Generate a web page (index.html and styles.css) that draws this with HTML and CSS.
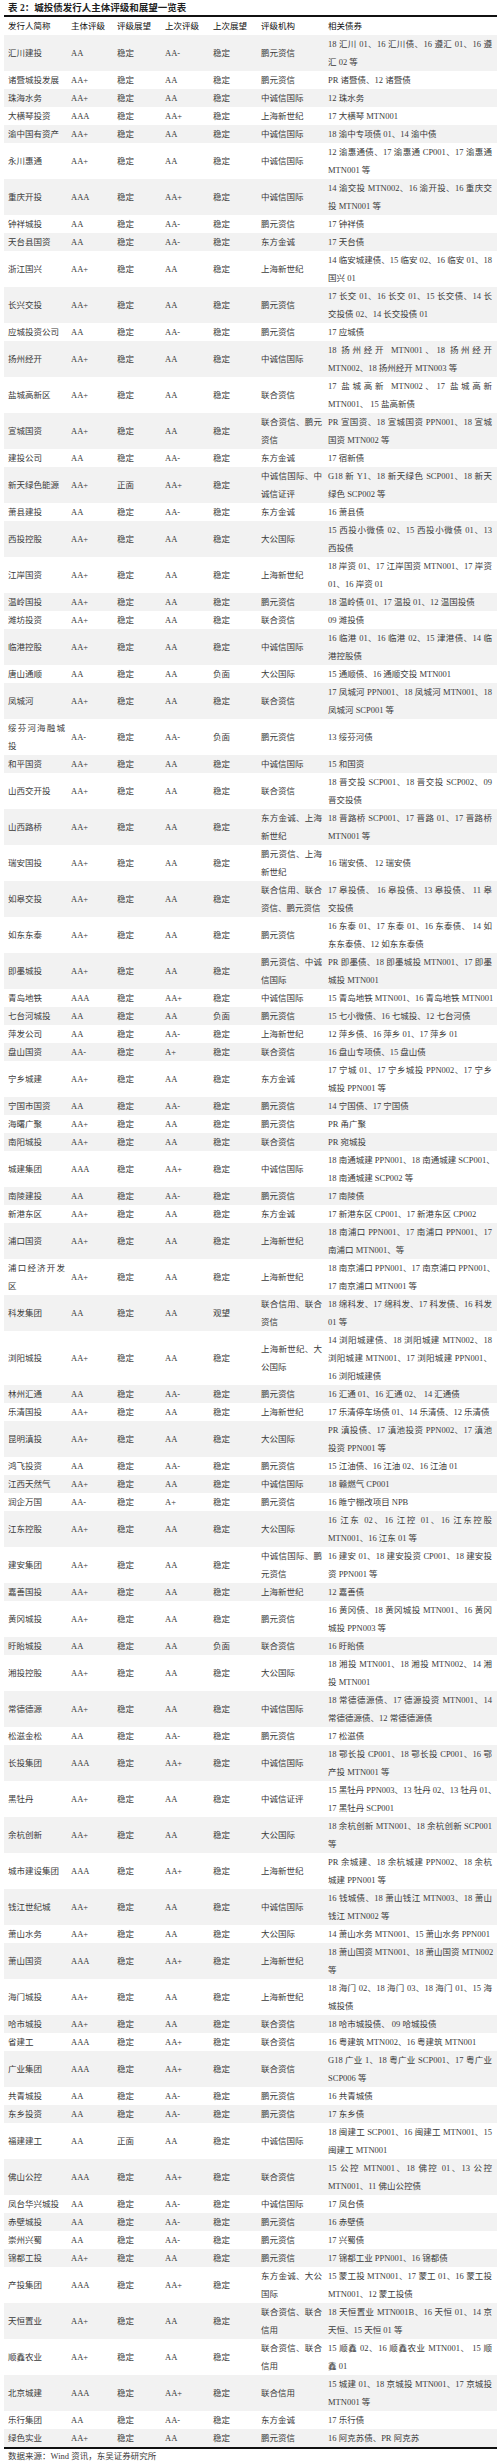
FILE: index.html
```html
<!DOCTYPE html>
<html lang="zh-CN">
<head>
<meta charset="utf-8">
<title>城投债发行人主体评级和展望一览表</title>
<link rel="stylesheet" href="styles.css">
</head>
<body>
<div class="page">
  <div class="title">表 2：城投债发行人主体评级和展望一览表</div>
  <table class="tbl">
    <colgroup>
      <col class="c1"><col class="c2"><col class="c3"><col class="c4"><col class="c5"><col class="c6"><col class="c7">
    </colgroup>
    <thead>
      <tr><th>发行人简称</th><th>主体评级</th><th>评级展望</th><th>上次评级</th><th>上次展望</th><th>评级机构</th><th class="bonds">相关债券</th></tr>
    </thead>
    <tbody>
      <tr><td>汇川建投</td><td>AA</td><td>稳定</td><td>AA-</td><td>稳定</td><td>鹏元资信</td><td class="bonds"><span class="ln">18 汇川 01、16 汇川债、16 遵汇 01、16 遵</span>汇 02 等</td></tr>
      <tr><td>诸暨城投发展</td><td>AA+</td><td>稳定</td><td>AA</td><td>稳定</td><td>鹏元资信</td><td class="bonds">PR 诸暨债、12 诸暨债</td></tr>
      <tr><td>珠海水务</td><td>AA+</td><td>稳定</td><td>AA</td><td>稳定</td><td>中诚信国际</td><td class="bonds">12 珠水务</td></tr>
      <tr><td>大横琴投资</td><td>AAA</td><td>稳定</td><td>AA+</td><td>稳定</td><td>上海新世纪</td><td class="bonds">17 大横琴 MTN001</td></tr>
      <tr><td>渝中国有资产</td><td>AA+</td><td>稳定</td><td>AA</td><td>稳定</td><td>中诚信国际</td><td class="bonds">18 渝中专项债 01、14 渝中债</td></tr>
      <tr><td>永川惠通</td><td>AA+</td><td>稳定</td><td>AA</td><td>稳定</td><td>中诚信国际</td><td class="bonds"><span class="ln">12 渝惠通债、17 渝惠通 CP001、17 渝惠通</span>MTN001 等</td></tr>
      <tr><td>重庆开投</td><td>AAA</td><td>稳定</td><td>AA+</td><td>稳定</td><td>中诚信国际</td><td class="bonds"><span class="ln">14 渝交投 MTN002、16 渝开投、16 重庆交</span>投 MTN001 等</td></tr>
      <tr><td>钟祥城投</td><td>AA</td><td>稳定</td><td>AA-</td><td>稳定</td><td>鹏元资信</td><td class="bonds">17 钟祥债</td></tr>
      <tr><td>天台县国资</td><td>AA</td><td>稳定</td><td>AA-</td><td>稳定</td><td>东方金诚</td><td class="bonds">17 天台债</td></tr>
      <tr><td>浙江国兴</td><td>AA+</td><td>稳定</td><td>AA</td><td>稳定</td><td>上海新世纪</td><td class="bonds"><span class="ln">14 临安城建债、15 临安 02、16 临安 01、18</span>国兴 01</td></tr>
      <tr><td>长兴交投</td><td>AA+</td><td>稳定</td><td>AA</td><td>稳定</td><td>鹏元资信</td><td class="bonds"><span class="ln">17 长交 01、16 长交 01、15 长交债、14 长</span>交投债 02、14 长交投债 01</td></tr>
      <tr><td>应城投资公司</td><td>AA</td><td>稳定</td><td>AA-</td><td>稳定</td><td>鹏元资信</td><td class="bonds">17 应城债</td></tr>
      <tr><td>扬州经开</td><td>AA+</td><td>稳定</td><td>AA</td><td>稳定</td><td>中诚信国际</td><td class="bonds"><span class="ln">18 扬州经开 MTN001、18 扬州经开</span>MTN002、18 扬州经开 MTN003 等</td></tr>
      <tr><td>盐城高新区</td><td>AA+</td><td>稳定</td><td>AA</td><td>稳定</td><td>联合资信</td><td class="bonds"><span class="ln">17 盐城高新 MTN002、17 盐城高新</span>MTN001、 15 盐高新债</td></tr>
      <tr><td>宣城国资</td><td>AA+</td><td>稳定</td><td>AA</td><td>稳定</td><td><span class="ln">联合资信、鹏元</span>资信</td><td class="bonds"><span class="ln">PR 宣国资、18 宣城国资 PPN001、18 宣城</span>国资 MTN002 等</td></tr>
      <tr><td>建投公司</td><td>AA</td><td>稳定</td><td>AA-</td><td>稳定</td><td>东方金诚</td><td class="bonds">17 宿新债</td></tr>
      <tr><td>新天绿色能源</td><td>AA+</td><td>正面</td><td>AA+</td><td>稳定</td><td><span class="ln">中诚信国际、中</span>诚信证评</td><td class="bonds"><span class="ln">G18 新 Y1、18 新天绿色 SCP001、18 新天</span>绿色 SCP002 等</td></tr>
      <tr><td>萧县建投</td><td>AA</td><td>稳定</td><td>AA-</td><td>稳定</td><td>东方金诚</td><td class="bonds">16 萧县债</td></tr>
      <tr><td>西投控股</td><td>AA+</td><td>稳定</td><td>AA</td><td>稳定</td><td>大公国际</td><td class="bonds"><span class="ln">15 西投小微债 02、15 西投小微债 01、13</span>西投债</td></tr>
      <tr><td>江岸国资</td><td>AA+</td><td>稳定</td><td>AA</td><td>稳定</td><td>上海新世纪</td><td class="bonds"><span class="ln">18 岸资 01、17 江岸国资 MTN001、17 岸资</span>01、16 岸资 01</td></tr>
      <tr><td>温岭国投</td><td>AA+</td><td>稳定</td><td>AA</td><td>稳定</td><td>鹏元资信</td><td class="bonds">18 温岭债 01、17 温投 01、12 温国投债</td></tr>
      <tr><td>潍坊投资</td><td>AA+</td><td>稳定</td><td>AA</td><td>稳定</td><td>联合资信</td><td class="bonds">09 潍投债</td></tr>
      <tr><td>临港控股</td><td>AA+</td><td>稳定</td><td>AA</td><td>稳定</td><td>中诚信国际</td><td class="bonds"><span class="ln">16 临港 01、16 临港 02、15 津港债、14 临</span>港控股债</td></tr>
      <tr><td>唐山通顺</td><td>AA</td><td>稳定</td><td>AA</td><td>负面</td><td>大公国际</td><td class="bonds">15 通顺债、16 通顺交投 MTN001</td></tr>
      <tr><td>凤城河</td><td>AA+</td><td>稳定</td><td>AA</td><td>稳定</td><td>联合资信</td><td class="bonds"><span class="ln">17 凤城河 PPN001、18 凤城河 MTN001、18</span>凤城河 SCP001 等</td></tr>
      <tr><td><span class="ln">绥芬河海融城</span>投</td><td>AA-</td><td>稳定</td><td>AA-</td><td>负面</td><td>鹏元资信</td><td class="bonds">13 绥芬河债</td></tr>
      <tr><td>和平国资</td><td>AA+</td><td>稳定</td><td>AA</td><td>稳定</td><td>中诚信国际</td><td class="bonds">15 和国资</td></tr>
      <tr><td>山西交开投</td><td>AA+</td><td>稳定</td><td>AA</td><td>稳定</td><td>联合资信</td><td class="bonds"><span class="ln">18 晋交投 SCP001、18 晋交投 SCP002、09</span>晋交投债</td></tr>
      <tr><td>山西路桥</td><td>AA+</td><td>稳定</td><td>AA</td><td>稳定</td><td><span class="ln">东方金诚、上海</span>新世纪</td><td class="bonds"><span class="ln">18 晋路桥 SCP001、17 晋路 01、17 晋路桥</span>MTN001 等</td></tr>
      <tr><td>瑞安国投</td><td>AA+</td><td>稳定</td><td>AA</td><td>稳定</td><td><span class="ln">鹏元资信、上海</span>新世纪</td><td class="bonds">16 瑞安债、 12 瑞安债</td></tr>
      <tr><td>如皋交投</td><td>AA+</td><td>稳定</td><td>AA</td><td>稳定</td><td><span class="ln">联合信用、联合</span>资信、鹏元资信</td><td class="bonds"><span class="ln">17 皋投债、 16 皋投债、13 皋投债、 11 皋</span>交投债</td></tr>
      <tr><td>如东东泰</td><td>AA+</td><td>稳定</td><td>AA</td><td>稳定</td><td>鹏元资信</td><td class="bonds"><span class="ln">16 东泰 01、17 东泰 01、16 东泰债、 14 如</span>东东泰债、12 如东东泰债</td></tr>
      <tr><td>即墨城投</td><td>AA+</td><td>稳定</td><td>AA</td><td>稳定</td><td><span class="ln">鹏元资信、中诚</span>信国际</td><td class="bonds"><span class="ln">PR 即墨债、18 即墨城投 MTN001、17 即墨</span>城投 MTN001</td></tr>
      <tr><td>青岛地铁</td><td>AAA</td><td>稳定</td><td>AA+</td><td>稳定</td><td>中诚信国际</td><td class="bonds">15 青岛地铁 MTN001、16 青岛地铁 MTN001</td></tr>
      <tr><td>七台河城投</td><td>AA</td><td>稳定</td><td>AA</td><td>负面</td><td>鹏元资信</td><td class="bonds">15 七小微债、16 七城投、12 七台河债</td></tr>
      <tr><td>萍发公司</td><td>AA</td><td>稳定</td><td>AA-</td><td>稳定</td><td>上海新世纪</td><td class="bonds">12 萍乡债、16 萍乡 01、17 萍乡 01</td></tr>
      <tr><td>盘山国资</td><td>AA-</td><td>稳定</td><td>A+</td><td>稳定</td><td>联合资信</td><td class="bonds">16 盘山专项债、15 盘山债</td></tr>
      <tr><td>宁乡城建</td><td>AA+</td><td>稳定</td><td>AA</td><td>稳定</td><td>东方金诚</td><td class="bonds"><span class="ln">17 宁城 01、17 宁乡城投 PPN002、17 宁乡</span>城投 PPN001 等</td></tr>
      <tr><td>宁国市国资</td><td>AA</td><td>稳定</td><td>AA-</td><td>稳定</td><td>鹏元资信</td><td class="bonds">14 宁国债、17 宁国债</td></tr>
      <tr><td>海曙广聚</td><td>AA+</td><td>稳定</td><td>AA</td><td>稳定</td><td>鹏元资信</td><td class="bonds">PR 甬广聚</td></tr>
      <tr><td>南阳城投</td><td>AA+</td><td>稳定</td><td>AA</td><td>稳定</td><td>联合资信</td><td class="bonds">PR 宛城投</td></tr>
      <tr><td>城建集团</td><td>AAA</td><td>稳定</td><td>AA+</td><td>稳定</td><td>中诚信国际</td><td class="bonds"><span class="ln">18 南通城建 PPN001、18 南通城建 SCP001、</span>18 南通城建 SCP002 等</td></tr>
      <tr><td>南陵建投</td><td>AA</td><td>稳定</td><td>AA-</td><td>稳定</td><td>鹏元资信</td><td class="bonds">17 南陵债</td></tr>
      <tr><td>新港东区</td><td>AA+</td><td>稳定</td><td>AA</td><td>稳定</td><td>东方金诚</td><td class="bonds">17 新港东区 CP001、17 新港东区 CP002</td></tr>
      <tr><td>浦口国资</td><td>AA+</td><td>稳定</td><td>AA</td><td>稳定</td><td>上海新世纪</td><td class="bonds"><span class="ln">18 南浦口 PPN001、17 南浦口 PPN001、17</span>南浦口 MTN001、等</td></tr>
      <tr><td><span class="ln">浦口经济开发</span>区</td><td>AA+</td><td>稳定</td><td>AA</td><td>稳定</td><td>上海新世纪</td><td class="bonds"><span class="ln">18 南京浦口 PPN001、17 南京浦口 PPN001、</span>17 南京浦口 MTN001 等</td></tr>
      <tr><td>科发集团</td><td>AA</td><td>稳定</td><td>AA</td><td>观望</td><td><span class="ln">联合信用、联合</span>资信</td><td class="bonds"><span class="ln">18 绵科发、17 绵科发、17 科发债、16 科发</span>01 等</td></tr>
      <tr><td>浏阳城投</td><td>AA+</td><td>稳定</td><td>AA</td><td>稳定</td><td><span class="ln">上海新世纪、大</span>公国际</td><td class="bonds"><span class="ln">14 浏阳城建债、18 浏阳城建 MTN002、18</span><span class="ln">浏阳城建 MTN001、17 浏阳城建 PPN001、</span>16 浏阳城建债</td></tr>
      <tr><td>林州汇通</td><td>AA</td><td>稳定</td><td>AA-</td><td>稳定</td><td>鹏元资信</td><td class="bonds">16 汇通 01、16 汇通 02、 14 汇通债</td></tr>
      <tr><td>乐清国投</td><td>AA+</td><td>稳定</td><td>AA</td><td>稳定</td><td>上海新世纪</td><td class="bonds">17 乐清停车场债 01、14 乐清债、12 乐清债</td></tr>
      <tr><td>昆明滇投</td><td>AA+</td><td>稳定</td><td>AA</td><td>稳定</td><td>大公国际</td><td class="bonds"><span class="ln">PR 滇投债、17 滇池投资 PPN002、17 滇池</span>投资 PPN001 等</td></tr>
      <tr><td>鸿飞投资</td><td>AA</td><td>稳定</td><td>AA-</td><td>稳定</td><td>鹏元资信</td><td class="bonds">15 江油债、16 江油 02、16 江油 01</td></tr>
      <tr><td>江西天然气</td><td>AA+</td><td>稳定</td><td>AA</td><td>稳定</td><td>中诚信国际</td><td class="bonds">18 赣燃气 CP001</td></tr>
      <tr><td>润企万国</td><td>AA-</td><td>稳定</td><td>A+</td><td>稳定</td><td>鹏元资信</td><td class="bonds">16 睢宁棚改项目 NPB</td></tr>
      <tr><td>江东控股</td><td>AA+</td><td>稳定</td><td>AA</td><td>稳定</td><td>大公国际</td><td class="bonds"><span class="ln">16 江东 02、16 江控 01、16 江东控股</span>MTN001、16 江东 01 等</td></tr>
      <tr><td>建安集团</td><td>AA+</td><td>稳定</td><td>AA</td><td>稳定</td><td><span class="ln">中诚信国际、鹏</span>元资信</td><td class="bonds"><span class="ln">16 建安 01、18 建安投资 CP001、18 建安投</span>资 PPN001 等</td></tr>
      <tr><td>嘉善国投</td><td>AA+</td><td>稳定</td><td>AA</td><td>稳定</td><td>上海新世纪</td><td class="bonds">12 嘉善债</td></tr>
      <tr><td>黄冈城投</td><td>AA+</td><td>稳定</td><td>AA</td><td>稳定</td><td>鹏元资信</td><td class="bonds"><span class="ln">16 黄冈债、18 黄冈城投 MTN001、16 黄冈</span>城投 PPN003 等</td></tr>
      <tr><td>盱眙城投</td><td>AA</td><td>稳定</td><td>AA</td><td>负面</td><td>联合资信</td><td class="bonds">16 盱眙债</td></tr>
      <tr><td>湘投控股</td><td>AA+</td><td>稳定</td><td>AA</td><td>稳定</td><td>大公国际</td><td class="bonds"><span class="ln">18 湘投 MTN001、18 湘投 MTN002、14 湘</span>投 MTN001</td></tr>
      <tr><td>常德德源</td><td>AA+</td><td>稳定</td><td>AA</td><td>稳定</td><td>中诚信国际</td><td class="bonds"><span class="ln">18 常德德源债、17 德源投资 MTN001、14</span>常德德源债、12 常德德源债</td></tr>
      <tr><td>松滋金松</td><td>AA</td><td>稳定</td><td>AA-</td><td>稳定</td><td>鹏元资信</td><td class="bonds">17 松滋债</td></tr>
      <tr><td>长投集团</td><td>AAA</td><td>稳定</td><td>AA+</td><td>稳定</td><td>中诚信国际</td><td class="bonds"><span class="ln">18 鄂长投 CP001、18 鄂长投 CP001、16 鄂</span>产投 MTN001 等</td></tr>
      <tr><td>黑牡丹</td><td>AA+</td><td>稳定</td><td>AA</td><td>稳定</td><td>中诚信证评</td><td class="bonds"><span class="ln">15 黑牡丹 PPN003、13 牡丹 02、13 牡丹 01、</span>17 黑牡丹 SCP001</td></tr>
      <tr><td>余杭创新</td><td>AA+</td><td>稳定</td><td>AA</td><td>稳定</td><td>大公国际</td><td class="bonds"><span class="ln">18 余杭创新 MTN001、18 余杭创新 SCP001</span>等</td></tr>
      <tr><td>城市建设集团</td><td>AAA</td><td>稳定</td><td>AA+</td><td>稳定</td><td>上海新世纪</td><td class="bonds"><span class="ln">PR 余城建、18 余杭城建 PPN002、18 余杭</span>城建 PPN001 等</td></tr>
      <tr><td>钱江世纪城</td><td>AA+</td><td>稳定</td><td>AA</td><td>稳定</td><td>中诚信国际</td><td class="bonds"><span class="ln">16 钱城债、18 萧山钱江 MTN003、18 萧山</span>钱江 MTN002 等</td></tr>
      <tr><td>萧山水务</td><td>AA+</td><td>稳定</td><td>AA</td><td>稳定</td><td>大公国际</td><td class="bonds">14 萧山水务 MTN001、15 萧山水务 PPN001</td></tr>
      <tr><td>萧山国资</td><td>AAA</td><td>稳定</td><td>AA+</td><td>稳定</td><td>上海新世纪</td><td class="bonds"><span class="ln">18 萧山国资 MTN001、18 萧山国资 MTN002</span>等</td></tr>
      <tr><td>海门城投</td><td>AA+</td><td>稳定</td><td>AA</td><td>稳定</td><td>上海新世纪</td><td class="bonds"><span class="ln">18 海门 02、18 海门 03、18 海门 01、15 海</span>城投债</td></tr>
      <tr><td>哈市城投</td><td>AA+</td><td>稳定</td><td>AA</td><td>稳定</td><td>联合资信</td><td class="bonds">18 哈市城投债、 09 哈城投债</td></tr>
      <tr><td>省建工</td><td>AAA</td><td>稳定</td><td>AA+</td><td>稳定</td><td>联合资信</td><td class="bonds">16 粤建筑 MTN002、16 粤建筑 MTN001</td></tr>
      <tr><td>广业集团</td><td>AAA</td><td>稳定</td><td>AA+</td><td>稳定</td><td>联合资信</td><td class="bonds"><span class="ln">G18 广业 1、18 粤广业 SCP001、17 粤广业</span>SCP006 等</td></tr>
      <tr><td>共青城投</td><td>AA</td><td>稳定</td><td>AA-</td><td>稳定</td><td>鹏元资信</td><td class="bonds">16 共青城债</td></tr>
      <tr><td>东乡投资</td><td>AA</td><td>稳定</td><td>AA-</td><td>稳定</td><td>鹏元资信</td><td class="bonds">17 东乡债</td></tr>
      <tr><td>福建建工</td><td>AA</td><td>正面</td><td>AA</td><td>稳定</td><td>中诚信国际</td><td class="bonds"><span class="ln">18 闽建工 SCP001、16 闽建工 MTN001、15</span>闽建工 MTN001</td></tr>
      <tr><td>佛山公控</td><td>AAA</td><td>稳定</td><td>AA+</td><td>稳定</td><td>联合资信</td><td class="bonds"><span class="ln">15 公控 MTN001、18 佛控 01、13 公控</span>MTN001、11 佛山公控债</td></tr>
      <tr><td>凤台华兴城投</td><td>AA</td><td>稳定</td><td>AA-</td><td>稳定</td><td>中诚信国际</td><td class="bonds">17 凤台债</td></tr>
      <tr><td>赤壁城投</td><td>AA</td><td>稳定</td><td>AA-</td><td>稳定</td><td>鹏元资信</td><td class="bonds">16 赤壁债</td></tr>
      <tr><td>崇州兴蜀</td><td>AA</td><td>稳定</td><td>AA-</td><td>稳定</td><td>鹏元资信</td><td class="bonds">17 兴蜀债</td></tr>
      <tr><td>锦都工投</td><td>AA+</td><td>稳定</td><td>AA</td><td>稳定</td><td>鹏元资信</td><td class="bonds">17 锦都工业 PPN001、16 锦都债</td></tr>
      <tr><td>产投集团</td><td>AAA</td><td>稳定</td><td>AA+</td><td>稳定</td><td><span class="ln">东方金诚、大公</span>国际</td><td class="bonds"><span class="ln">15 蒙工投 MTN001、17 蒙工 01、16 蒙工投</span>MTN001、12 蒙工投债</td></tr>
      <tr><td>天恒置业</td><td>AA+</td><td>稳定</td><td>AA</td><td>稳定</td><td><span class="ln">联合资信、联合</span>信用</td><td class="bonds"><span class="ln">18 天恒置业 MTN001B、16 天恒 01、14 京</span>天恒、15 天恒 01 等</td></tr>
      <tr><td>顺鑫农业</td><td>AA+</td><td>稳定</td><td>AA</td><td>稳定</td><td><span class="ln">联合资信、联合</span>信用</td><td class="bonds"><span class="ln">15 顺鑫 02、16 顺鑫农业 MTN001、 15 顺</span>鑫 01</td></tr>
      <tr><td>北京城建</td><td>AAA</td><td>稳定</td><td>AA+</td><td>稳定</td><td>联合信用</td><td class="bonds"><span class="ln">15 城建 01、18 京城投 MTN001、17 京城投</span>MTN001 等</td></tr>
      <tr><td>乐行集团</td><td>AA</td><td>稳定</td><td>AA-</td><td>稳定</td><td>东方金诚</td><td class="bonds">17 乐行债</td></tr>
      <tr><td>绿色实业</td><td>AA+</td><td>稳定</td><td>AA</td><td>稳定</td><td>鹏元资信</td><td class="bonds">16 阿克苏债、PR 阿克苏</td></tr>
    </tbody>
  </table>
  <div class="source">数据来源：Wind 资讯，东吴证券研究所</div>
</div>
</body>
</html>
```

FILE: styles.css
```css
html, body {
  margin: 0;
  padding: 0;
  background: #ffffff;
}

.page {
  width: 500px;
  font-family: "Liberation Serif", "Noto Sans CJK SC", serif;
  color: #3a3a3a;
}

.title {
  padding: 1px 0 0 8px;
  height: 14px;
  line-height: 14px;
  font-size: 9.5px;
  font-weight: bold;
  color: #1e1e1e;
  white-space: nowrap;
}

.tbl {
  margin-left: 4px;
  width: 493px;
  table-layout: fixed;
  border-collapse: collapse;
  border-spacing: 0;
  border-top: 2px solid #111111;
  border-bottom: 2px solid #111111;
  font-size: 8.5px;
  line-height: 18px;
}

.c1 { width: 63px; }
.c2 { width: 46px; }
.c3 { width: 48px; }
.c4 { width: 48px; }
.c5 { width: 48px; }
.c6 { width: 67px; }
.c7 { width: 173px; }

.tbl th,
.tbl td {
  padding: 0 2px 0 4px;
  height: 18px;
  text-align: left;
  vertical-align: middle;
  white-space: nowrap;
  overflow: hidden;
}

.tbl th {
  font-weight: normal;
  color: #111111;
}

.tbl td.bonds,
.tbl th.bonds {
  padding-right: 5px;
}

.ln {
  display: block;
  text-align: justify;
  text-align-last: justify;
}

.tbl tbody tr:nth-child(odd) {
  background: #f2f2f2;
}

.source {
  padding-left: 8px;
  height: 14px;
  line-height: 14px;
  font-size: 8.5px;
  color: #3a3a3a;
}
```
